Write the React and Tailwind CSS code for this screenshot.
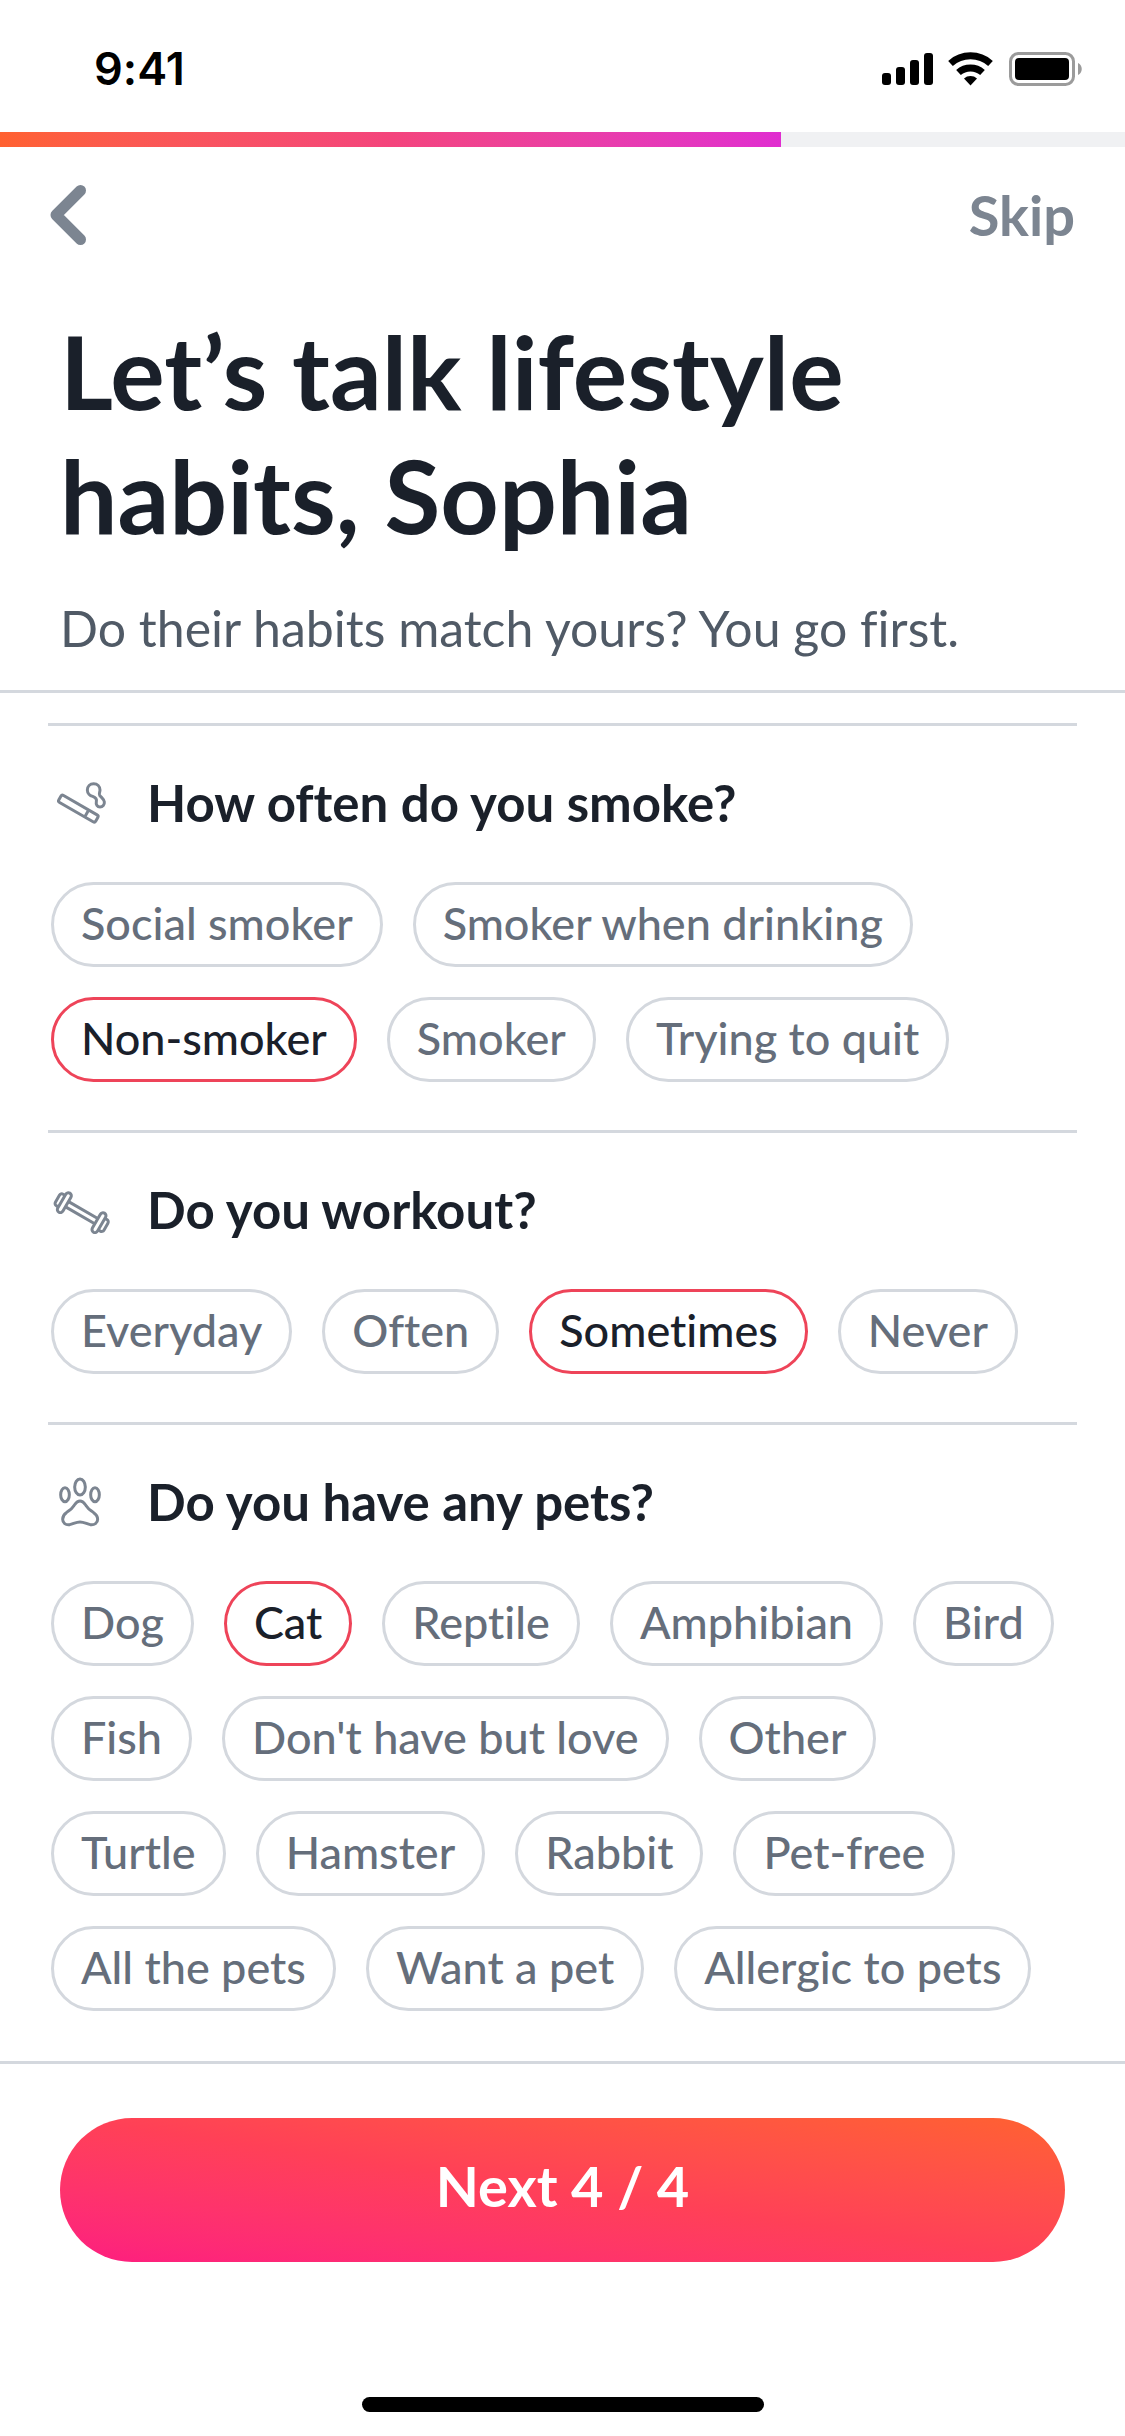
import React, { useState } from "react";

const QUESTIONS = [
    {
        id: "smoke",
        title: "How often do you smoke?",
        Icon: CigaretteIcon,
        options: ["Social smoker", "Smoker when drinking", "Non-smoker", "Smoker", "Trying to quit"],
    },
    {
        id: "workout",
        title: "Do you workout?",
        Icon: DumbbellIcon,
        options: ["Everyday", "Often", "Sometimes", "Never"],
    },
    {
        id: "pets",
        title: "Do you have any pets?",
        Icon: PawIcon,
        options: [
            "Dog", "Cat", "Reptile", "Amphibian", "Bird",
            "Fish", "Don't have but love", "Other",
            "Turtle", "Hamster", "Rabbit", "Pet-free",
            "All the pets", "Want a pet", "Allergic to pets",
        ],
    },
];

export default function App() {
    const [answers, setAnswers] = useState({
        smoke: "Non-smoker",
        workout: "Sometimes",
        pets: "Cat",
    });

    const pick = (id, option) =>
        setAnswers((prev) => ({ ...prev, [id]: prev[id] === option ? null : option }));

    return (
        <div className="flex min-h-screen flex-col bg-white font-[Lato,sans-serif] text-[#1a202a] [font-variant-ligatures:none]">
            <StatusBar />

            {/* Progress */}
            <div className="h-[15px] w-full bg-[#f0f1f3]">
                <div className="h-full w-[69.4%] bg-linear-to-r from-[#ff6130] via-[#f4447c] to-[#e02dd0]" />
            </div>

            <header className="border-b-[3px] border-[#d4d8de] pb-8">
                <div className="flex items-center justify-between px-[50px] pt-[38px] text-[#7c8591]">
                    <button type="button" aria-label="Back">
                        <svg viewBox="0 0 36 60" className="h-[60px] w-9" aria-hidden="true">
                            <path
                                d="M30.500 5.500 6 30l24.500 24.500"
                                fill="none"
                                stroke="currentColor"
                                strokeWidth="11"
                                strokeLinecap="round"
                                strokeLinejoin="round"
                            />
                        </svg>
                    </button>
                    <button type="button" className="text-[56px] leading-[60px] font-bold">
                        Skip
                    </button>
                </div>
                <div className="px-[60px] pt-[64px]">
                    <h1 className="max-w-[900px] text-[102px] leading-[124px] font-bold">
                        Let’s talk lifestyle habits, Sophia
                    </h1>
                    <p className="mt-[41px] text-[50px] leading-[60px] text-[#505a66]">
                        Do their habits match yours? You go first.
                    </p>
                </div>
            </header>

            <main className="flex-1 px-12 pt-[30px]">
                {QUESTIONS.map((q) => (
                    <Question key={q.id} question={q} value={answers[q.id]} onPick={pick} />
                ))}
            </main>

            <footer className="border-t-[3px] border-[#d4d8de] px-[60px] pt-[54px] pb-6">
                <button
                    type="button"
                    className="h-36 w-full rounded-full bg-linear-to-tr from-[#fd1d7f] via-[#ff4057] to-[#ff6130] pb-2 text-[56px] leading-[60px] font-bold text-white"
                >
                    Next 4 / 4
                </button>
                <div className="mx-auto mt-[135px] h-[15px] w-[402px] rounded-full bg-black" />
            </footer>
        </div>
    );
}

function Question({ question, value, onPick }) {
    const { id, title, Icon, options } = question;

    return (
        <section className="border-t-[3px] border-[#d4d8de] pt-[47px] pb-12" aria-labelledby={id}>
            <div className="flex items-center gap-9 pl-[3px]">
                <Icon />
                <h2 id={id} className="text-[51px] leading-[60px] font-bold">
                    {title}
                </h2>
            </div>
            <div className="mt-[49px] flex flex-wrap gap-[30px] pr-3 pl-[3px]">
                {options.map((option) => (
                    <Chip key={option} selected={option === value} onClick={() => onPick(id, option)}>
                        {option}
                    </Chip>
                ))}
            </div>
        </section>
    );
}

function Chip({ selected, onClick, children }) {
    return (
        <button
            type="button"
            aria-pressed={selected}
            onClick={onClick}
            className={`h-[85px] rounded-full border-[3px] px-[27px] pb-1 text-[45px] leading-[50px] font-medium whitespace-nowrap ${
                selected ? "border-[#ee4459] text-[#1a202a]" : "border-[#d4d8de] text-[#656e7b]"
            }`}
        >
            {children}
        </button>
    );
}

function StatusBar() {
    return (
        <div className="flex h-[132px] items-center justify-between pr-[43px] pl-[94px] text-black">
            <span className="pt-1.5 font-[Inter,sans-serif] text-[45px] leading-[54px] font-semibold">9:41</span>
            <svg viewBox="0 0 200 34" className="mt-1.5 h-[34px] w-[200px]" aria-hidden="true">
                <rect x="0" y="21" width="9" height="12" rx="3" />
                <rect x="14" y="15" width="9" height="18" rx="3" />
                <rect x="28" y="8" width="9" height="25" rx="3" />
                <rect x="42" y="1" width="9" height="32" rx="3" />
                <g fill="none" stroke="currentColor" strokeWidth="7">
                    <path d="M68.500 11.500a30 30 0 0 1 40 0" />
                    <path d="M76.500 20.500a18 18 0 0 1 24 0" />
                </g>
                <path d="M82 26.500a10 10 0 0 1 13 0L88.500 33.500z" />
                <rect x="128.500" y="1.500" width="63" height="31" rx="8" fill="none" stroke="#9b9b9b" strokeWidth="3" />
                <rect x="133" y="6" width="54" height="22" rx="4" />
                <path d="M196 11c5 2 5 10 0 12z" fill="#9b9b9b" />
            </svg>
        </div>
    );
}

/* ---------- Question icons ---------- */
function CigaretteIcon() {
    return (
        <svg viewBox="33 283 180 180" className="size-[60px]" fill="none" stroke="#7c8591" strokeWidth="9" aria-hidden="true">
            <g transform="translate(115 390) rotate(30)">
                <rect x="-64" y="-12" width="128" height="24" rx="6" />
                <path d="M29-12v24" />
            </g>
            <path d="M161 315C150 315 142 323 142 334C142 344 150 351 158 353C166 356 171 361 169 369C167 378 172 385 180 385C188 385 194 378 193 370C192 361 184 357 179 350C176 345 180 341 180 334C180 323 172 315 161 315Z" />
        </svg>
    );
}

function DumbbellIcon() {
    return (
        <svg viewBox="33 606 180 180" className="size-[60px]" fill="white" stroke="#7c8591" strokeWidth="9" aria-hidden="true">
            <g transform="translate(125 704) rotate(30)">
                <rect x="-55" y="-9" width="110" height="18" />
                <rect x="-84" y="-20" width="18" height="40" rx="8" />
                <rect x="66" y="-20" width="18" height="40" rx="8" />
                <rect x="-69" y="-33" width="18" height="66" rx="9" />
                <rect x="51" y="-33" width="18" height="66" rx="9" />
            </g>
        </svg>
    );
}

function PawIcon() {
    return (
        <svg viewBox="33 219 180 180" className="size-[60px]" fill="none" stroke="#7c8591" strokeWidth="9" aria-hidden="true">
            <ellipse cx="120" cy="264" rx="16" ry="24" />
            <ellipse cx="75" cy="287" rx="13" ry="21" />
            <ellipse cx="165" cy="287" rx="13" ry="21" />
            <path d="M120 306C110 306 107 313 101 321C94 332 88 334 79 341C70 347 68 354 68 361C68 372 77 379 89 377C101 374 109 369 120 369C131 369 139 374 151 377C163 379 173 372 173 361C173 354 170 347 161 341C152 334 146 332 139 321C133 313 130 306 120 306Z" />
        </svg>
    );
}
